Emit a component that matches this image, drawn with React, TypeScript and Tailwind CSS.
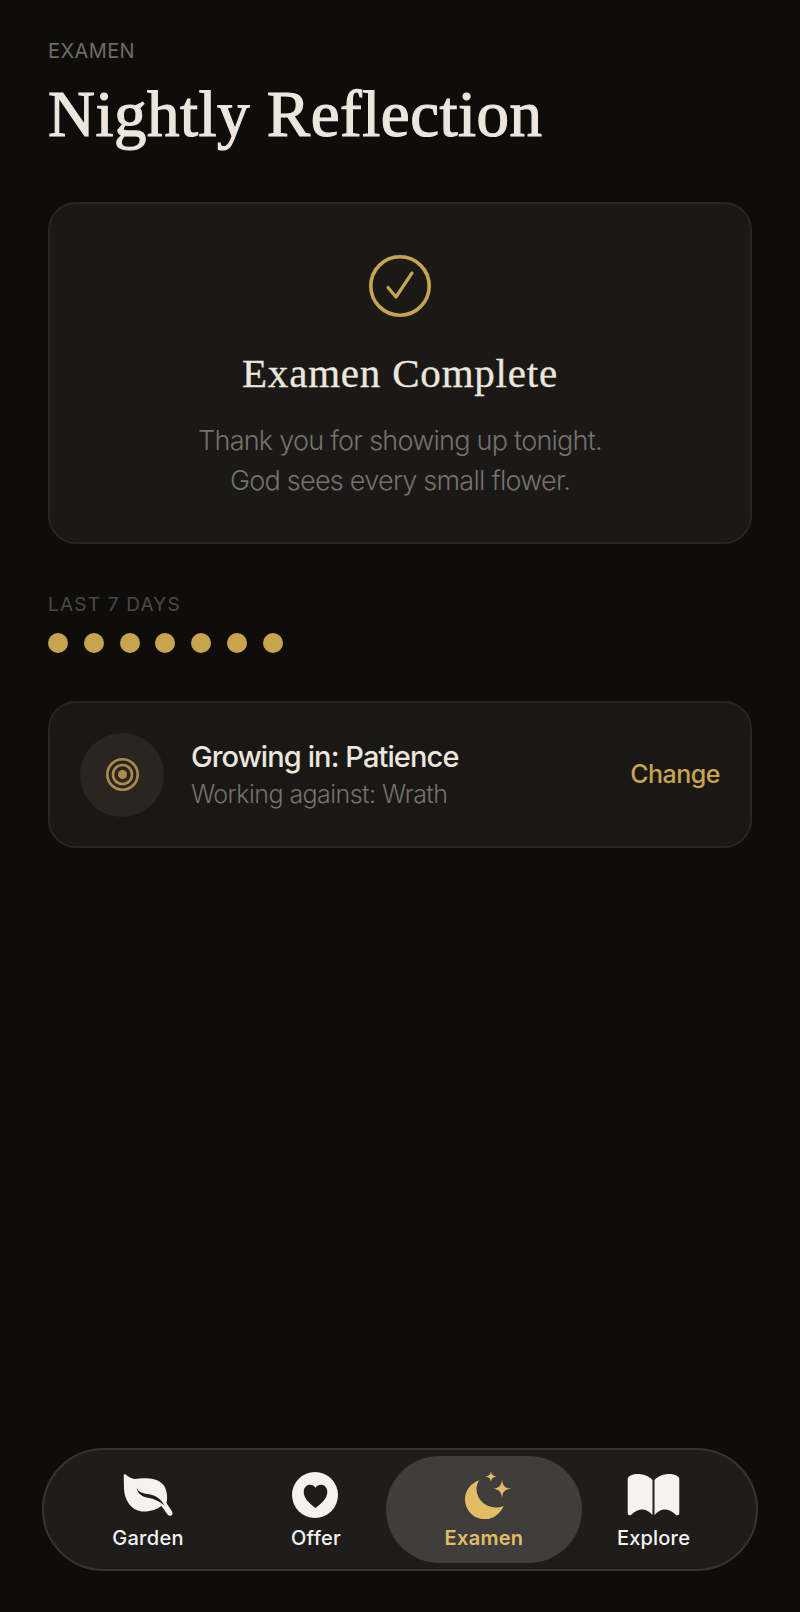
import type { ReactNode } from "react";

function LeafIcon() {
  return (
    <svg viewBox="0 0 50 42" className="h-[42px] w-[50px]" fill="#f4f3f1">
      <path d="M.7 1.500C.7.300 1.800-.1 2.800.600 5.500 3 8 5 12 5 15 5 20 4 26 4.500 33 5 38.500 7.500 41.500 12.500 44.500 18 44.500 24.500 43.500 29L49 37.500C50 39.500 49.500 41.500 47.500 41.800 45.800 42 44.800 41 44 39.800L38.500 32C34.500 35 28 37.500 21 37.500 9.500 37.500 2 28 1 15z" />
      <path
        d="M13.500 13.200C15 18.500 20.500 19.300 27 20.500 33 21.700 38 25 41.500 31.500 36.500 27.500 32 25 26 24 19.500 23 14.500 20 13.500 13.200z"
        fill="#1e1d1c"
      />
    </svg>
  );
}

function HeartCircleIcon() {
  return (
    <svg viewBox="0 0 46 46" className="-ml-[2px] h-[46px] w-[46px]">
      <circle cx="23" cy="23" r="23" fill="#f4f3f1" />
      <path
        d="M23.500 36C17.500 31.500 11.700 26.500 11.700 19.800 11.700 15.500 14.700 12.800 18.200 12.800c2.200 0 4.200 1 5.300 3 1.100-2 3.100-3 5.300-3 3.500 0 6.500 2.700 6.500 7 0 6.700-5.800 11.700-11.800 16.200z"
        fill="#1e1d1c"
      />
    </svg>
  );
}

function MoonStarsIcon() {
  return (
    <svg viewBox="0 0 46 48" className="ml-[7px] h-[48px] w-[46px]" fill="#e3bd65">
      <path d="M14.300 9.300C5.500 12 0 20 0 28.500 0 39.500 9 48.300 20 48.300c8 0 15-5.300 18.700-13.300-2.700 1-5.200 1.500-7.700 1.500C20 36.500 11.500 28 11.500 18c0-3 1-6 2.800-8.700z" />
      <path d="M26 0c.4 3.800 2 5 6 5.400-4 .4-5.600 1.700-6 5.800-.4-4.100-2-5.400-6-5.800 4-.4 5.600-1.600 6-5.400z" />
      <path d="M37 8.700c.7 6 2.800 8.200 9 9-6.200.8-8.300 3-9 9-.7-6-2.800-8.200-9-9 6.200-.8 8.300-3 9-9z" />
    </svg>
  );
}

function BookIcon() {
  return (
    <svg viewBox="0 0 53 42" className="ml-[2px] h-[42px] w-[53px]" fill="#f4f3f1">
      <path d="M25.500 6C22 2 16 0 11 0 6 0 1 1.500.7 5v34c0 2.500 2.300 3 3.800 1.500C8 37 12 35.500 15 35.500c4 0 7.500 2 10.500 5.500z" />
      <path d="M27.500 6C31 2 37 0 42 0c5 0 10 1.500 10.300 5v34c0 2.500-2.300 3-3.800 1.500C45 37 41 35.500 38 35.500c-4 0-7.500 2-10.500 5.500z" />
    </svg>
  );
}

function NavItem({
  icon,
  label,
  active,
  shift,
}: {
  icon: ReactNode;
  label: string;
  active?: boolean;
  shift?: boolean;
}) {
  return (
    <div
      className={
        active
          ? "-mx-[14px] flex h-[107px] flex-col items-center justify-end rounded-[54px] bg-[#3f3e3d] pb-[11px]"
          : "flex h-[107px] flex-col items-center justify-end pb-[11px]"
      }
    >
      <div className="flex h-[50px] items-center justify-center">{icon}</div>
      <span
        className={
          active
            ? "mt-[4px] text-[20px] leading-[28px] font-semibold tracking-[0.3px] text-[#e3bd65]"
            : shift
              ? "mt-[4px] ml-[3px] text-[20px] leading-[28px] font-medium tracking-[0.2px] text-[#f4f3f1]"
              : "mt-[4px] text-[20px] leading-[28px] font-medium tracking-[0.3px] text-[#f4f3f1]"
        }
      >
        {label}
      </span>
    </div>
  );
}

export default function App() {
  return (
    <div className="flex h-[1612px] w-[800px] flex-col overflow-hidden bg-[#0e0d0c] font-['Inter',sans-serif]">
      <div className="px-[48px] pt-[38px]">
        <p className="text-[20px] leading-[26px] tracking-[0.4px] text-[#6f6b66]">EXAMEN</p>
        <h1 className="mt-[10px] font-['Liberation_Serif',serif] text-[65px] leading-[80px] font-normal tracking-[0.5px] text-[#ece6dc] [-webkit-text-stroke:1.200px_#ece6dc]">
          Nightly Reflection
        </h1>

        <section className="mt-[48px] flex h-[342px] flex-col items-center rounded-[28px] border-2 border-[#272624] bg-[#1a1918] pt-[51px]">
          <svg viewBox="0 0 62 62" className="h-[62px] w-[62px]" fill="none" stroke="#c9a44f">
            <circle cx="31" cy="31" r="29.200" strokeWidth="3.600" />
            <path d="M19 32.500l8 9.500L43 18" strokeWidth="3.200" strokeLinecap="round" strokeLinejoin="round" />
          </svg>
          <h2 className="mt-[29px] font-['Liberation_Serif',serif] text-[41px] leading-[54px] font-normal tracking-[0.8px] text-[#ece6dc] [-webkit-text-stroke:0.3px_#ece6dc]">
            Examen Complete
          </h2>
          <p className="mt-[21px] text-center text-[27px] leading-[40px] font-light tracking-[-0.75px] text-[#76716b]">
            Thank you for showing up tonight.
            <br />
            God sees every small flower.
          </p>
        </section>

        <p className="mt-[48px] text-[19px] leading-[26px] tracking-[1.2px] text-[#4d4a46]">LAST 7 DAYS</p>
        <div className="mt-[15px] flex gap-[15.800px]">
          {[0, 1, 2, 3, 4, 5, 6].map((day) => (
            <span key={day} className="h-[20px] w-[20px] rounded-full bg-[#c9a44f]" />
          ))}
        </div>

        <section className="mt-[48px] flex h-[147px] items-center rounded-[28px] border-2 border-[#272624] bg-[#191817] px-[30px]">
          <div className="flex h-[84px] w-[84px] items-center justify-center rounded-full bg-[#2a2520]">
            <svg viewBox="0 0 33 33" className="h-[33px] w-[33px]" fill="none" stroke="#a98c4c" strokeWidth="2.600">
              <circle cx="16.500" cy="16.500" r="15.200" />
              <circle cx="16.500" cy="16.500" r="9.500" />
              <circle cx="16.500" cy="16.500" r="4.500" fill="#a98c4c" stroke="none" />
            </svg>
          </div>
          <div className="ml-[27px] flex-1">
            <p className="text-[29px] leading-[38px] font-medium tracking-[-0.9px] text-[#ece6dc]">Growing in: Patience</p>
            <p className="text-[25px] leading-[36px] font-light tracking-[-0.55px] text-[#76716b]">Working against: Wrath</p>
          </div>
          <span className="text-[25px] font-medium tracking-[-0.5px] text-[#c9a44f]">Change</span>
        </section>
      </div>

      <nav className="mx-[42px] mt-auto mb-[41px] grid h-[123px] grid-cols-4 items-center rounded-[62px] border-2 border-[#353432] bg-[#1e1d1c] px-[20px]">
        <NavItem icon={<LeafIcon />} label="Garden" />
        <NavItem icon={<HeartCircleIcon />} label="Offer" />
        <NavItem icon={<MoonStarsIcon />} label="Examen" active />
        <NavItem icon={<BookIcon />} label="Explore" shift />
      </nav>
    </div>
  );
}
